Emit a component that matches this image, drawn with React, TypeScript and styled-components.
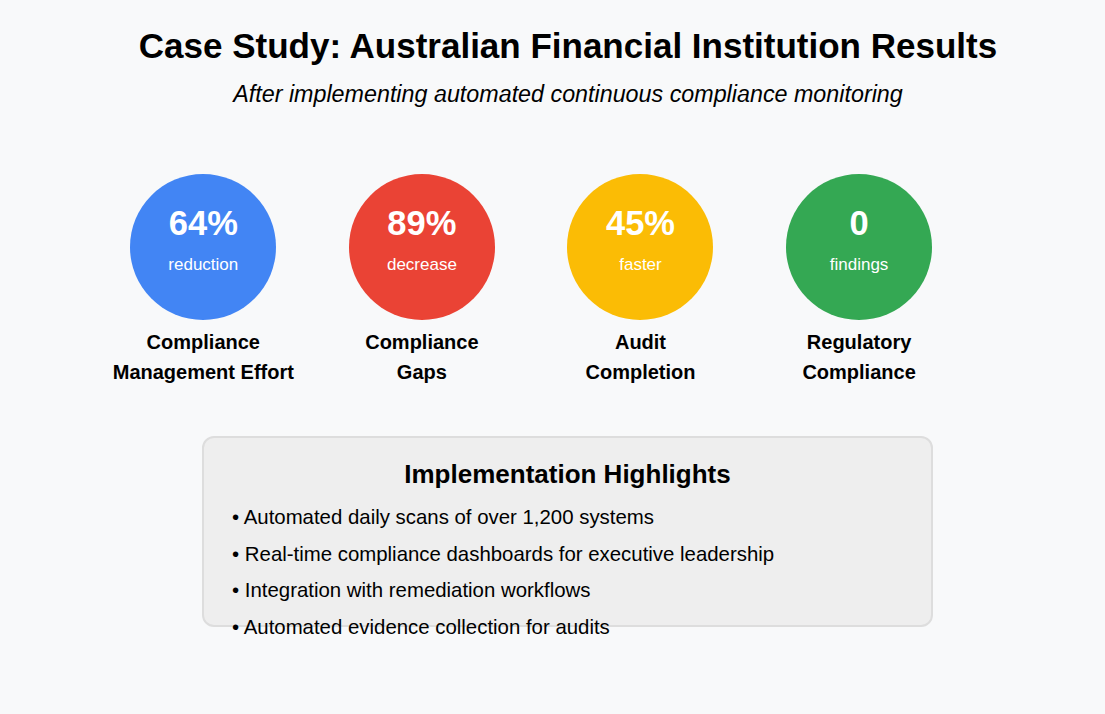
import styled, { createGlobalStyle } from 'styled-components';

const GlobalStyle = createGlobalStyle`
  html,
  body {
    margin: 0;
    padding: 0;
    background: #f8f9fa;
  }

  body {
    font-family: 'Liberation Sans', Arial, sans-serif;
    color: #000000;
  }
`;

type Metric = {
  value: string;
  unit: string;
  label: string[];
  color: string;
};

const metrics: Metric[] = [
  { value: '64%', unit: 'reduction', label: ['Compliance', 'Management Effort'], color: '#4285f4' },
  { value: '89%', unit: 'decrease', label: ['Compliance', 'Gaps'], color: '#ea4335' },
  { value: '45%', unit: 'faster', label: ['Audit', 'Completion'], color: '#fbbc05' },
  { value: '0', unit: 'findings', label: ['Regulatory', 'Compliance'], color: '#34a853' },
];

const highlights = [
  'Automated daily scans of over 1,200 systems',
  'Real-time compliance dashboards for executive leadership',
  'Integration with remediation workflows',
  'Automated evidence collection for audits',
];

const App = () => {
  return (
    <>
      <GlobalStyle />
      <Page>
        <Header>
          <Title>Case Study: Australian Financial Institution Results</Title>
          <Subtitle>After implementing automated continuous compliance monitoring</Subtitle>
        </Header>

        <MetricRow>
          {metrics.map((m) => (
            <MetricItem key={m.value + m.unit}>
              <Circle $color={m.color}>
                <Value>{m.value}</Value>
                <Unit>{m.unit}</Unit>
              </Circle>
              <Label>
                {m.label.map((line) => (
                  <span key={line}>{line}</span>
                ))}
              </Label>
            </MetricItem>
          ))}
        </MetricRow>

        <HighlightBox>
          <BoxTitle>Implementation Highlights</BoxTitle>
          <List>
            {highlights.map((h) => (
              <ListItem key={h}>• {h}</ListItem>
            ))}
          </List>
        </HighlightBox>
      </Page>
    </>
  );
};
export default App;

const Page = styled.div`
  width: 1105px;
  height: 714px;
  display: flex;
  flex-direction: column;
  align-items: flex-start;
  overflow: hidden;
`;

const Header = styled.header`
  width: 1074px;
  margin-left: 31px;
  padding-top: 25px;
  display: flex;
  flex-direction: column;
  align-items: center;
  gap: 13px;
`;

const Title = styled.h1`
  margin: 0;
  font-size: 35px;
  line-height: 42px;
  font-weight: 700;
  white-space: nowrap;
`;

const Subtitle = styled.p`
  margin: 0;
  font-size: 23.3px;
  line-height: 28px;
  font-style: italic;
  white-space: nowrap;
`;

const MetricRow = styled.div`
  margin-top: 66px;
  margin-left: 94px;
  display: flex;
`;

const MetricItem = styled.div`
  width: 218.6px;
  display: flex;
  flex-direction: column;
  align-items: center;
  gap: 8px;
`;

const Circle = styled.div<{ $color: string }>`
  width: 146px;
  height: 146px;
  border-radius: 50%;
  background: ${(p) => p.$color};
  color: #ffffff;
  display: flex;
  flex-direction: column;
  align-items: center;
  padding-top: 28.5px;
  box-sizing: border-box;
  gap: 12px;
`;

const Value = styled.div`
  font-size: 34.5px;
  line-height: 40px;
  font-weight: 700;
`;

const Unit = styled.div`
  font-size: 17px;
  line-height: 20px;
`;

const Label = styled.div`
  display: flex;
  flex-direction: column;
  align-items: center;
  font-size: 20px;
  line-height: 29.5px;
  font-weight: 700;
  white-space: nowrap;
`;

const HighlightBox = styled.section`
  margin-top: 49px;
  margin-left: 202px;
  width: 731px;
  height: 191px;
  box-sizing: border-box;
  border: 2px solid #dddddd;
  border-radius: 12px;
  background: #eeeeee;
  padding: 20px 0 0 28px;
  display: flex;
  flex-direction: column;
  gap: 9px;
`;

const BoxTitle = styled.h2`
  margin: 0 28px 0 0;
  text-align: center;
  font-size: 26px;
  line-height: 32px;
  font-weight: 700;
`;

const List = styled.ul`
  margin: 0;
  padding: 0;
  list-style: none;
`;

const ListItem = styled.li`
  font-size: 20.4px;
  line-height: 36.6px;
  white-space: nowrap;
`;
